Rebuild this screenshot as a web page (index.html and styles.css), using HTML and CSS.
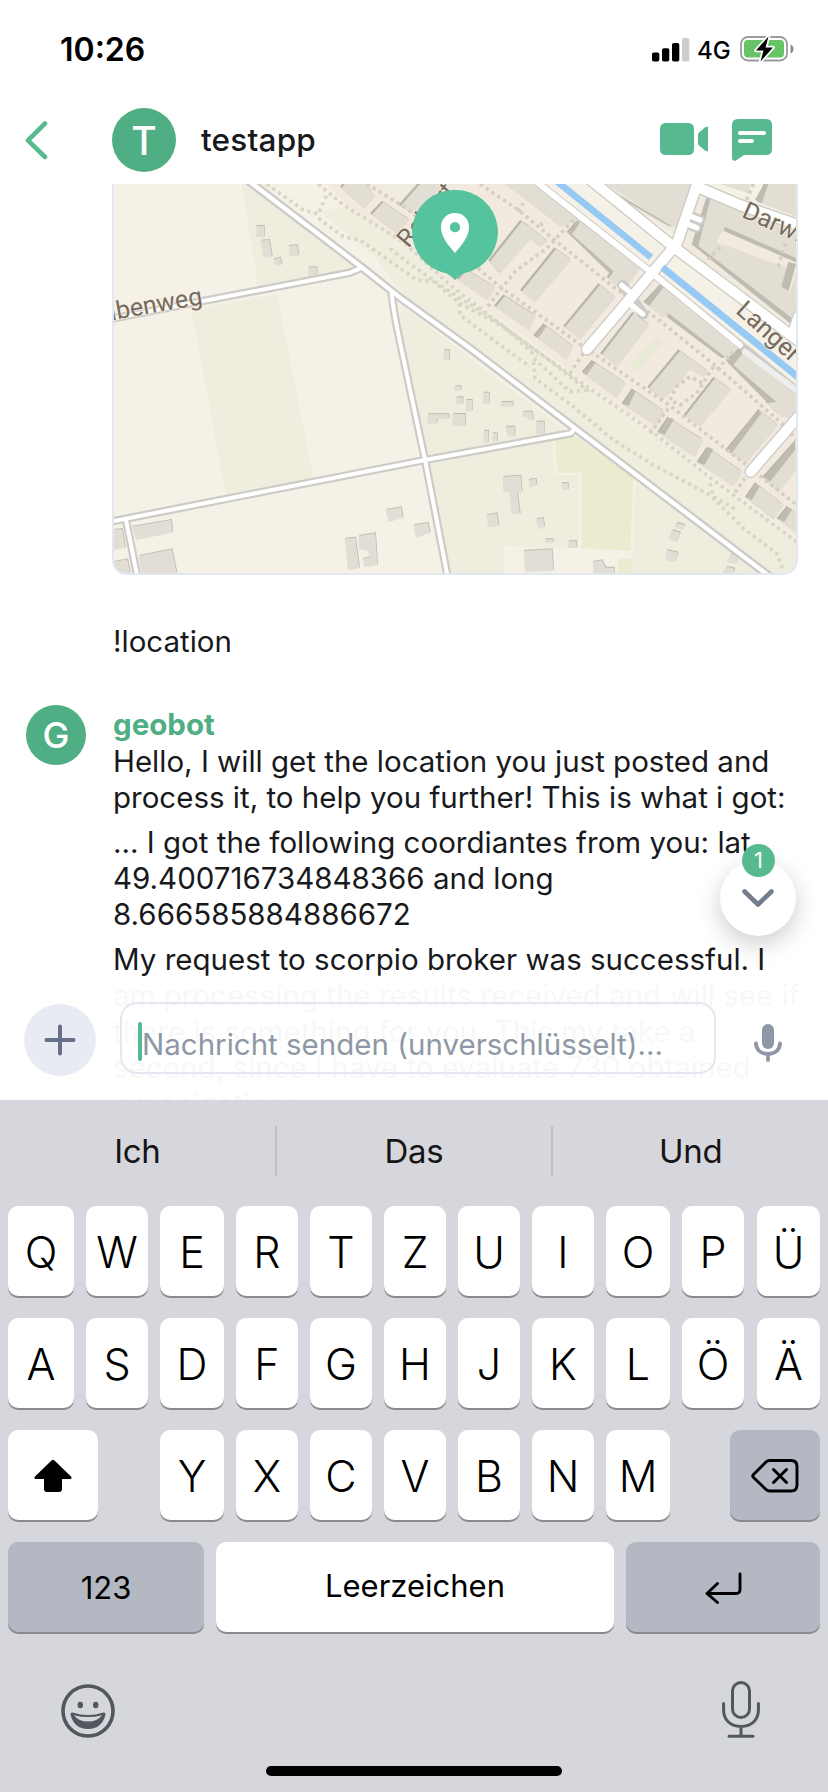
FILE: index.html
```html
<!DOCTYPE html>
<html lang="de">
<head>
<meta charset="utf-8">
<title>testapp</title>
<link rel="stylesheet" href="styles.css">
</head>
<body>
<div class="screen">
  <div class="status">
    <span class="clock">10:26</span>
    <div class="status-right">
      <svg class="signal" width="38" height="24" viewBox="0 0 38 24"><rect x="0" y="14.500" width="7.300" height="9" rx="1.800"/><rect x="10" y="10.200" width="7.300" height="13.300" rx="1.800"/><rect x="20" y="5" width="7.300" height="18.500" rx="1.800"/><rect x="30" y="0" width="7.300" height="23.500" rx="1.800" fill="#ccc"/></svg>
      <span class="network">4G</span>
      <svg width="54" height="28" viewBox="0 0 54 28"><rect x="1" y="2" width="46" height="23.500" rx="7" fill="none" stroke="#9b9b9b" stroke-width="1.800"/><rect x="4" y="5" width="40" height="17.500" rx="4" fill="#66c466"/><path d="M50.500 9.500c2 .8 3 2.400 3 4.500s-1 3.700-3 4.500z" fill="#8c8c8c"/><path d="M28.500 1.500L16 15.500h7.500L20.500 26.500 33 12.500h-7.500z" fill="#000" stroke="#fff" stroke-width="3.500" stroke-linejoin="round" paint-order="stroke"/></svg>
    </div>
  </div>
  <div class="header">
    <svg class="back" width="24" height="40" viewBox="0 0 24 40"><path d="M20 3.500L3 20.300L20 37" fill="none" stroke="#57b98f" stroke-width="4.600" stroke-linecap="round" stroke-linejoin="round"/></svg>
    <div class="avatar room-avatar">T</div>
    <span class="room">testapp</span>
    <svg class="video" width="48" height="32" viewBox="0 0 48 32"><rect width="34" height="32" rx="5.500"/><path d="M38 11.500q0-1 1-1.900l6-5.100q1.500-1.200 3-.6V28q-1.500.700-3-.5l-6-5q-1-.9-1-2z"/></svg>
    <svg class="thread" width="40" height="42" viewBox="0 0 40 42"><path d="M6 0h28q6 0 6 6v24q0 6-6 6H12l-8 5.500q-4 1-4-3V6q0-6 6-6z"/><path d="M8 14h24M8 22h12" stroke="#fff" stroke-width="4" stroke-linecap="round"/></svg>
  </div>
  <div class="timeline">
    <svg class="map" width="686" height="391" viewBox="36 42 2058 1173">
      <defs>
        <clipPath id="mapclip"><path d="M42 42H2088V1165Q2088 1209 2044 1209H86Q42 1209 42 1165Z"/></clipPath>
        <g id="blocks">
          <path d="M165 42H260L390 150L335 172ZM120 275L215 155L240 170L295 215L270 232L245 205L150 312ZM215 365L318 237L365 270L255 398ZM50 300L137 352L112 392L25 330ZM137 412L165 378L258 438L238 482ZM255 500L285 465L372 530L350 570ZM345 472L450 345L498 382L390 510ZM355 190L390 150L575 290L535 345L515 360L475 325L490 305L460 285ZM455 555L552 430L600 465L502 590ZM400 610L430 575L528 640L500 685ZM585 400L635 348L885 540L820 565L655 435L640 442ZM597 655L690 543L775 605L760 622L720 600L680 650L640 690ZM705 740L795 625L845 660L752 770ZM520 705L550 660L645 725L618 768ZM627 790L657 745L760 810L735 862ZM745 880L775 835L878 905L850 950ZM830 845L930 722L985 765L890 880ZM832 575L870 538L1040 670V745L990 740L945 690ZM942 925L1040 815V900L985 968ZM890 985L920 942L1002 1005L970 1050ZM985 1050L1015 1012L1040 1030V1090ZM470 42H735L675 172L655 165ZM810 42H900V72ZM950 42H1040V140L920 95ZM-325 55L-315 42H-245L-225 80L-255 118ZM-235 135L-200 97L-120 150L-160 192ZM-150 110L-90 42H-20L-70 150Z"/>
        </g>
        <g id="sheds">
          <path d="M468 168h24v34h-22zM482 212l26-2 8 50-26 4zM565 228l26-3 5 32-28 2zM519 268l22-5 4 22-18 2zM625 292h25v22l-25 6zM1030 541h18v30h-18zM1063 649h20v13h-20zM1068 682h20v20h-20zM1098 690h18v34h-18zM982 733h64v14h-34v14h-30zM1058 732h38v35h-38zM1150 668h18v34h-20zM1202 704v-8h36v14h-36zM1268 725h28l4 26h-16l-4-10h-14zM1308 755h24v38h-24zM1216 770h28v30h-20zM1150 782h15v36h-15zM1177 790h14v25h-14zM857 1020l46-8 6 32-44 12zM940 1066l44-8 6 30-42 16zM734 1106l32-3 12 92-34 6zM776 1098l50-8 6 96-40 6-4-26 22-6-6-16-28-8zM96 1070l118-20 4 38-110 22zM116 1158l100-20 14 72h-106zM42 1080l24-4 10 58-34 6zM42 1176l40-8 8 42h-48zM1208 921l54-4 4 48-14 4 8 64h-26l-6-64-18-6zM1285 930l22-4 4 20-22 8zM1384 940h20v20h-18zM1160 1036l30-6 6 38-32 4zM1307 1048l22-4 4 28-18 6zM1335 1108h24v10h-24zM1405 1114h24v20h-24zM1270 1142l86-4 4 64-84 4zM1478 1176l28-5 10 22h26v20h-62zM1730 1058l24 8-8 14-22-10zM1717 1080l24 8-12 28-24-8zM1700 1140l34 8-10 28-28-6zM1892 1152l24 8-10 22-24-6zM1880 1190l24 6-4 20-32-4z"/>
        </g>
      </defs>
      <g clip-path="url(#mapclip)">
        <rect x="36" y="42" width="2058" height="1173" fill="#f5f1e6"/>
        <path fill="#eeedde" d="M425 42H440L790 300L740 318L475 350ZM275 420L530 373L640 925L377 972ZM890 440L918 418L1420 800L2060 1260H1040L975 870ZM660 125L740 108L1050 340L1450 640L2094 1110V1220H2010L1420 765L1110 525L900 365L830 265Z"/>
        <path fill="#f2eadf" d="M680 42H1310L1640 305L2094 665V1105L1450 632L1050 338L740 105Z"/>
        <path fill="#f2eadf" d="M1790 70L2094 170V480L1740 230ZM1500 42H1780L1725 190L1700 180Z"/>
        <path fill="#eeedde" d="M930 42H970L950 100L850 50V42Z"/>
        <path fill="#ebeccf" d="M1360 800L1420 795L1603 925L1595 1143L1445 1148V912H1372ZM1556 1165h38v50h-42z"/>
        <path fill="#e8ead6" d="M1665 500l25 15-78 92-24-14z"/>
        <path fill="none" stroke="#f5f1e6" stroke-width="7" d="M1360 805L1370 912H1441V1145M1603 925L1594 1165"/>
        <path fill="#f5f1e6" d="M1210 1128L1445 1135L1594 1143V1165H1556L1550 1215H1216Z"/>
        <g transform="translate(1050 0)">
          <use href="#blocks" fill="#b8b5aa" transform="translate(-5 -5)"/>
          <use href="#blocks" fill="#e2ded3"/>
          <path fill="#e2ded3" d="M735 225L782 85L820 98L1040 190V265L825 172L800 215L1020 365L1040 300V465H1028Z"/>
          <path fill="#e2ded3" d="M812 220L1025 300L1005 355L960 330Z"/>
          <path fill="#bebbb0" d="M725 223L768 85L782 85L745 228L1040 455V468L1030 468ZM825 170L1040 265V278L820 182ZM940 42H955L935 100L920 94ZM1015 275L1038 282L1016 362L994 350ZM470 52L668 170L655 168L460 55ZM355 190L382 153L390 158L366 193L490 303L483 314ZM585 400L625 345L642 350L598 407ZM655 430L825 560L815 565L650 440ZM832 577L862 536L886 540L850 585L970 688L980 695L950 700L945 690ZM255 500L280 464L290 468L266 503ZM400 610L430 573L438 577L410 615ZM520 702L548 659L558 664L535 708ZM627 788L660 743L672 748L644 794ZM745 878L775 832L790 838L763 886ZM830 842L920 724L935 728L845 850ZM942 922L1035 815V840L960 935ZM890 982L915 941L930 948L905 990ZM985 1047L1013 1011L1027 1018L1003 1056Z"/>
          <g fill="none" stroke="#d6cfc0" stroke-width="11" stroke-dasharray="10 11">
            <path d="M90 42L205 120L320 215L490 350L620 445L800 590L995 760L1040 810"/>
            <path d="M-250 42L-130 115L90 300L150 350L400 530L650 700L870 870L1040 1005"/>
            <path d="M370 150L290 235L200 300L150 360L110 415M205 125L220 100M270 165L290 155M400 550L360 610M790 590L740 670L690 705L660 690L680 650L720 620L760 640M655 715L600 790M850 545L800 600M885 925L850 975M760 285L815 225M1005 220L985 290M910 42L890 90"/>
          </g>
          <g fill="none" stroke="#d8d6c5" stroke-width="11" stroke-dasharray="10 11">
            <path d="M-395 42L-320 105L-140 215L0 345L200 500L390 635L600 780L790 930L1040 1115"/>
            <path d="M-550 42L-440 120L-395 132L-370 75M-395 145L-320 200L-270 210L-100 330L-50 335L30 400L160 470L290 565L410 660L360 665L290 600L250 565L255 625L370 710L490 810L610 885L780 975L880 1075L980 1150L1000 1200"/>
            <path d="M-180 235L-130 275L0 365L150 460L260 560M25 380L30 435L110 495L240 590M780 940L790 980L860 1020"/>
          </g>
        </g>
        <use href="#sheds" fill="#bebbb0" transform="translate(2 -3)"/>
        <use href="#sheds" fill="#e2ded5"/>
        <g fill="none" stroke="#cdcbc7" stroke-linejoin="round">
          <path stroke-width="25" d="M36 446L750 308L787 292M36 1054L975 870L1412 790L1425 775M875 365C878 420 886 450 975 870L1043 1220M78 1050L112 1220"/>
          <path stroke-width="27" d="M445 32L787 293L900 383L1110 535L1425 775L2010 1220"/>
        </g>
        <g fill="none" stroke="#fff" stroke-linejoin="round">
          <path stroke-width="12" d="M36 446L750 308L787 292M36 1054L975 870L1412 790L1425 775M875 365C878 420 886 450 975 870L1043 1220M78 1050L112 1220"/>
          <path stroke-width="13" d="M445 32L787 293L900 383L1110 535L1425 775L2010 1220"/>
        </g>
        <g transform="translate(1050 0)" fill="none" stroke-linecap="round" stroke-linejoin="round">
          <path stroke="#96caf5" stroke-width="20" stroke-linecap="butt" d="M318 32L603 262M637 292L1045 622"/>
          <g stroke="#cdcbc7"><path stroke-width="31" d="M518 345L580 433M725 140L750 150M720 165L740 173"/><path stroke-width="24" d="M255 32L590 296L1045 665M515 346L580 433"/><path stroke-width="38" d="M425 32L670 230L1045 512M745 32L680 222L411 538M745 52L870 105L1045 165M1045 740L902 905M1030 490L1045 440"/></g>
          <g stroke="#fff"><path stroke-width="18" d="M255 32L590 296L870 525"/><path stroke="#eee" stroke-width="18" d="M885 545L1045 665"/><path stroke-width="16" d="M515 346L545 370M530 393L578 432M725 140L750 150M720 165L740 173"/><path stroke-width="30" d="M425 32L670 230L1045 512M745 32L680 222L411 538M745 52L870 105L1045 165M1045 740L902 905M1030 490L1045 440"/></g>
          <path stroke="#96caf5" stroke-width="20" stroke-linecap="butt" d="M637 292L1045 622"/>
        </g>
        <g class="map-label">
          <text transform="translate(12 455) rotate(-10)">abenweg</text>
          <text transform="translate(925 236) rotate(-50)">Robert</text>
          <text transform="translate(1922 140) rotate(24)">Darwin</text>
          <text transform="translate(1904 426) rotate(42)">Langer</text>
        </g>
        <path fill="#56c39f" d="M1065 60a126 126 0 0 1 30 249q-12 3-30 21q-18-18-30-21A126 126 0 0 1 1065 60Z"/>
        <path fill="#fff" fill-rule="evenodd" d="M1065 129c24 0 42 18 42 42c0 30-22 54-42 78c-20-24-42-48-42-78c0-24 18-42 42-42zm0 27a15 15 0 1 0 0 31a15 15 0 0 0 0-31z"/>
      </g>
      <path d="M39 42V1165Q39 1212 86 1212H2044Q2091 1212 2091 1165V42" fill="none" stroke="#e3e7f0" stroke-width="6"/>
    </svg>
    <p class="command">!location</p>
    <div class="message">
      <div class="avatar sender-avatar">G</div>
      <div class="content">
        <div class="sender">geobot</div>
        <p>Hello, I will get the location you just posted and<br>process it, to help you further! This is what i got:</p>
        <p>... I got the following coordiantes from you: lat<br>49.400716734848366 and long<br>8.666585884886672</p>
        <p>My request to scorpio broker was successful. I<br>am processing the results received and will see if<br>there is something for you. This my take a<br>second, since I have to evaluate 730 obtained<br>organizations</p>
      </div>
    </div>
    <div class="jump">
      <svg width="32" height="19" viewBox="0 0 32 19"><path d="M2.500 2.500L16 15.500L29.500 2.500" fill="none" stroke="#737d8c" stroke-width="4.600" stroke-linecap="round" stroke-linejoin="round"/></svg>
      <span class="badge">1</span>
    </div>
    <div class="composer">
      <div class="plus"><svg width="32" height="32" viewBox="0 0 32 32"><path d="M16 2.500V29.500M2.500 16H29.500" stroke="#667089" stroke-width="4" stroke-linecap="round"/></svg></div>
      <div class="field"><span class="caret"></span><span class="placeholder">Nachricht senden (unverschlüsselt)...</span></div>
      <svg class="mic" width="28" height="38" viewBox="0 0 28 38"><rect x="8" y="0" width="12" height="25" rx="6" fill="#8d97a5"/><path d="M2 19.500c.5 7 5.500 10.500 12 10.500s11.500-3.500 12-10.500M14 30v6" fill="none" stroke="#8d97a5" stroke-width="3.800" stroke-linecap="round"/></svg>
    </div>
  </div>
  <div class="keyboard">
    <div class="suggestions"><span>Ich</span><i></i><span>Das</span><i></i><span>Und</span></div>
    <div class="keys">
      <b>Q</b><b>W</b><b>E</b><b>R</b><b>T</b><b>Z</b><b>U</b><b>I</b><b>O</b><b>P</b><b>Ü</b>
      <b>A</b><b>S</b><b>D</b><b>F</b><b>G</b><b>H</b><b>J</b><b>K</b><b>L</b><b>Ö</b><b>Ä</b>
      <b class="shift"><svg width="38" height="34" viewBox="0 0 38 34"><path d="M17.800 1.200q1.200-1 2.400 0L37 17.500q1.500 2.500-1 2.500H28v10q0 3-3 3H13q-3 0-3-3V20H2q-2.500 0-1-2.500z"/></svg></b>
      <b class="y">Y</b><b>X</b><b>C</b><b>V</b><b>B</b><b>N</b><b>M</b>
      <b class="delete"><svg width="48" height="36" viewBox="0 0 48 36" fill="none" stroke="#000" stroke-width="2.900" stroke-linecap="round" stroke-linejoin="round"><path d="M18.500 2.500H40q6 0 6 6V27q0 6-6 6H18.500q-2 0-3.500-1.500L2.500 19.500q-1.500-1.500 0-3L15 4q1.500-1.500 3.500-1.500zM22.500 11.500L35.500 24.500M35.500 11.500L22.500 24.500"/></svg></b>
    </div>
    <div class="bottom-row">
      <b class="dark">123</b><b class="space">Leerzeichen</b>
      <b class="dark"><svg width="38" height="32" viewBox="0 0 38 32" fill="none" stroke="#000" stroke-width="2.900" stroke-linecap="round" stroke-linejoin="round"><path d="M36 2V17.500q0 4-4 4H3M13.500 11.500L3 21.500L13.500 30.500"/></svg></b>
    </div>
    <div class="tools">
      <svg width="54" height="54" viewBox="0 0 54 54"><circle cx="27" cy="27" r="25" fill="none" stroke="#53565c" stroke-width="3.600"/><ellipse cx="19.300" cy="21" rx="2.700" ry="3.300" fill="#53565c"/><ellipse cx="34.700" cy="21" rx="2.700" ry="3.300" fill="#53565c"/><path d="M11.500 28.500q15.500 5 31 0q2.200-.4 2 2Q41 45 27 45T9.500 30.500q-.2-2.400 2-2z" fill="#53565c"/><path d="M13 31.200q14 3.800 28 0Q36.500 37.500 27 37.500T13 31.200z" fill="#d6d7dc"/></svg>
      <svg width="38" height="57" viewBox="0 0 38 57" fill="none" stroke="#53565c" stroke-width="3" stroke-linecap="round"><rect x="10.500" y="1.500" width="17" height="35" rx="8.500"/><path d="M1.600 22.500V29c0 10 7 16.500 17.400 16.500S36.400 39 36.400 29V22.500M19 45.500V55M7 55.300H31"/></svg>
    </div>
    <div class="home"></div>
  </div>
</div>
</body>
</html>
```
FILE: styles.css
```css
* { box-sizing: border-box; }
body { margin: 0; background: #fff; font-family: Inter, "Liberation Sans", sans-serif; color: #17191c; }
svg { display: block; flex: none; }
p { margin: 0; }
.screen { width: 828px; height: 1792px; overflow: hidden; display: flex; flex-direction: column; }
.status { height: 96px; flex: none; display: flex; justify-content: space-between; padding: 30px 34px 0 60px; color: #000; }
.clock { font-size: 32px; line-height: 40px; font-weight: 600; letter-spacing: 0; }
.status-right { display: flex; align-items: flex-start; padding-top: 5px; }
.signal { margin-top: 3px; }
.network { font-size: 24px; line-height: 30px; font-weight: 500; margin: 1px 10px 0 7px; width: 33px; }
.header { height: 88px; flex: none; display: flex; align-items: center; padding-left: 25px; padding-right: 56px; }
.avatar { border-radius: 50%; background: #50ae84; color: #fff; display: flex; align-items: center; justify-content: center; flex: none; font-weight: 500; }
.room-avatar { width: 64px; height: 64px; margin-left: 63px; font-size: 39px; }
.room { font-size: 31.500px; line-height: 40px; font-weight: 500; margin-left: 25px; padding-bottom: 1px; letter-spacing: .2px; }
.video { margin-left: auto; margin-bottom: 3px; fill: #57b98f; }
.thread { margin-left: 24px; fill: #57b98f; }
.timeline { height: 916px; flex: none; overflow: hidden; position: relative; }
.map { margin-left: 112px; }
.map-label { font-family: Roboto, sans-serif; font-size: 75px; fill: #766a5e; stroke: #f5f1e6; stroke-width: 5px; paint-order: stroke; }
.command { margin: 48px 0 0 113px; font-size: 29.500px; line-height: 36px; }
.message { display: flex; padding: 46px 0 0 26px; }
.sender-avatar { width: 60px; height: 60px; font-size: 36px; }
.content { margin-left: 27px; font-size: 29.500px; line-height: 36px; white-space: nowrap; }
.content p { margin-bottom: 9px; }
.sender { color: #50ae84; font-weight: 700; line-height: 38px; }
.jump { position: absolute; left: 720px; top: 676px; width: 76px; height: 76px; border-radius: 50%; background: #fff; box-shadow: 0 8px 24px rgba(0,0,0,.2); display: flex; align-items: center; justify-content: center; }
.badge { position: absolute; left: 22px; top: -16px; width: 33px; height: 33px; border-radius: 50%; background: #57b98f; color: #fff; font-size: 22px; line-height: 33px; text-align: center; }
.composer { position: absolute; left: 0; right: 0; bottom: 0; height: 117px; background: rgba(255,255,255,.97); display: flex; align-items: flex-start; padding: 19px 46px 0 24px; }
.plus { width: 72px; height: 72px; margin-top: 2px; border-radius: 50%; background: #e8ebf3; display: flex; align-items: center; justify-content: center; }
.field { width: 596px; height: 72px; margin-left: 24px; border: 2px solid #e3e7f1; border-radius: 17px; padding: 18px 0 0 16px; display: flex; }
.caret { width: 4px; height: 39px; border-radius: 2px; background: #57b98f; }
.placeholder { font-size: 29.500px; line-height: 40px; padding-top: 2px; color: #8d97a5; white-space: nowrap; }
.mic { margin: 22px 0 0 38px; }
.keyboard { flex: 1; background: #d6d7dc; color: #000; }
.suggestions { height: 106px; padding-top: 26px; display: flex; color: #151515; }
.suggestions span { flex: 1; text-align: center; font-size: 33px; line-height: 50px; letter-spacing: -.3px; }
.suggestions i { width: 2px; height: 50px; background: #bfc0c5; }
.keys { padding: 0 8px; display: grid; grid-template-columns: 66px 62px 64px 62px 62px 62px 62px 62px 64px 62px 64px; grid-auto-rows: 90px; gap: 22px 12px; }
.keyboard b { background: #fff; border-radius: 10px; box-shadow: 0 2px 0 #898a8e; font-weight: 350; font-size: 43px; display: flex; align-items: center; justify-content: center; padding-top: 1px; }
.keys b:nth-child(11n) { margin-left: 1px; }
.keys .shift { width: 90px; margin-left: 0; }
.keys .y { grid-column: 3; }
.keys .delete { grid-column: 10 / 12; width: 90px; justify-self: end; background: #b3b8c2; }
.bottom-row { display: grid; grid-template-columns: 196px 398px 194px; gap: 12px; height: 90px; margin: 22px 8px 0; }
.keyboard .bottom-row b { font-size: 31px; font-weight: 400; }
.keyboard .bottom-row .dark { background: #b3b8c2; }
.keyboard .bottom-row .space { padding-bottom: 3px; padding-top: 0; }
.tools { display: flex; justify-content: space-between; padding: 49px 68px 0 61px; height: 134px; }
.tools svg:first-child { margin-top: 3px; }
.home { width: 296px; height: 10px; margin-left: 266px; border-radius: 5px; background: #000; }
```
